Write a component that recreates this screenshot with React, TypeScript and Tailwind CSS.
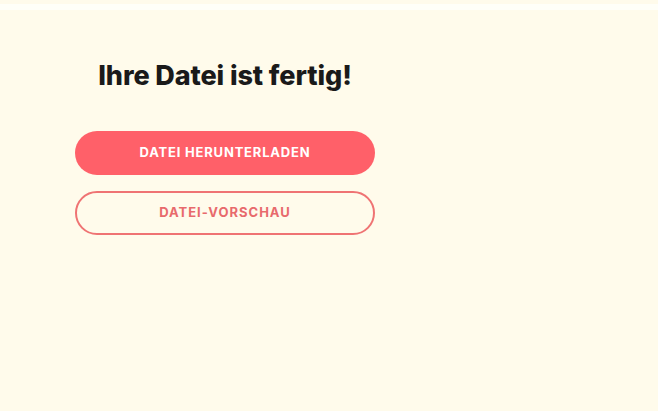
import React from "react";

export default function App() {
  return (
    <div className="w-[658px] h-[411px] bg-[#fffbeb] overflow-hidden" style={{ fontFamily: "Inter, 'Noto Sans', sans-serif" }}>
      <div className="pt-[4px]">
        <div className="h-[6px] bg-[#fffff8]" />
      </div>
      <div className="ml-[75px] w-[300px] flex flex-col">
        <h1 className="mt-[48px] text-center text-[27px] leading-[36px] font-extrabold text-[#1a1a1a] tracking-[-0.1px]">
          Ihre Datei ist fertig!
        </h1>
        <button className="mt-[37px] h-[44px] rounded-full bg-[#ff6069] text-white text-[13px] font-bold tracking-[0.8px]">
          DATEI HERUNTERLADEN
        </button>
        <button className="mt-[16px] h-[44px] rounded-full border-2 border-[#ef7373] bg-transparent text-[#e86a6c] text-[13px] font-bold tracking-[1px]">
          DATEI-VORSCHAU
        </button>
      </div>
    </div>
  );
}
